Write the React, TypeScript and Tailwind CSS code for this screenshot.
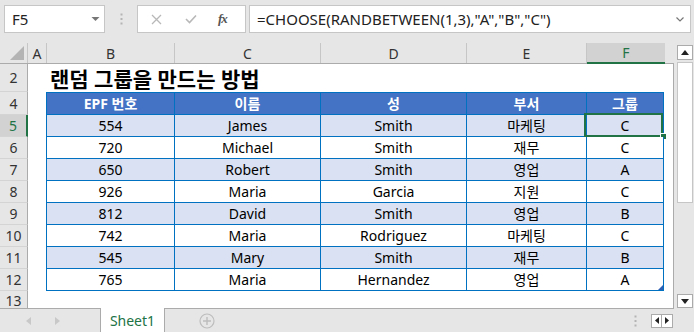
import React from "react";

const rows = [
  ["554", "James", "Smith", "마케팅", "C"],
  ["720", "Michael", "Smith", "재무", "C"],
  ["650", "Robert", "Smith", "영업", "A"],
  ["926", "Maria", "Garcia", "지원", "C"],
  ["812", "David", "Smith", "영업", "B"],
  ["742", "Maria", "Rodriguez", "마케팅", "C"],
  ["545", "Mary", "Smith", "재무", "B"],
  ["765", "Maria", "Hernandez", "영업", "A"],
];

const headers = ["EPF 번호", "이름", "성", "부서", "그룹"];

const cellW = [
  "w-[129px] border-l",
  "w-[146px]",
  "w-[146px]",
  "w-[120px]",
  "w-[77px]",
];

function RowHead({ n, selected, cls }: { n: string; selected?: boolean; cls: string }) {
  return (
    <div
      className={`${cls} w-[28px] shrink-0 flex items-center justify-center border-b border-b-[#d4d4d4] text-[14px] ${
        selected
          ? "bg-[#d2d2d2] text-[#217346] border-r-2 border-r-[#217346]"
          : "bg-[#e6e6e6] text-[#333] border-r border-r-[#ababab]"
      }`}
    >
      {n}
    </div>
  );
}

export default function App() {
  return (
    <div className="w-[694px] h-[332px] overflow-hidden bg-[#e6e6e6] flex flex-col font-['Noto_Sans','Noto_Sans_CJK_KR',sans-serif] text-[#222]">
      {/* formula bar */}
      <div className="h-[37px] shrink-0 flex items-start pt-[5px]">
        <div className="ml-[4px] w-[101px] h-[28px] bg-white border border-[#c6c6c6] flex items-center justify-between pl-[7px] pr-[4px]">
          <span className="text-[15px] text-[#222]">F5</span>
          <svg width="9" height="6" viewBox="0 0 9 6">
            <path d="M0.5 1 L8.5 1 L4.5 5 Z" fill="#777" />
          </svg>
        </div>
        <div className="w-[32px] h-[28px] flex items-center justify-center">
          <svg width="3" height="12" viewBox="0 0 3 12">
            <rect x="0.5" y="0.5" width="2" height="2" fill="#b4b4b4" />
            <rect x="0.5" y="5" width="2" height="2" fill="#b4b4b4" />
            <rect x="0.5" y="9.5" width="2" height="2" fill="#b4b4b4" />
          </svg>
        </div>
        <div className="w-[109px] h-[28px] bg-white border border-[#c6c6c6] flex items-center">
          <svg className="ml-[13px]" width="11" height="11" viewBox="0 0 11 11">
            <path d="M1 1 L10 10 M10 1 L1 10" stroke="#b8b8b8" strokeWidth="1.3" />
          </svg>
          <svg className="ml-[23px]" width="12" height="10" viewBox="0 0 12 10">
            <path d="M1 5 L4.5 8.5 L11 1.5" stroke="#b8b8b8" strokeWidth="1.6" fill="none" />
          </svg>
          <span className="ml-[21px] text-[13px] italic font-bold text-[#555] font-['Liberation_Serif',serif] tracking-[-1px]">
            fx
          </span>
        </div>
        <div className="ml-[3px] w-[442px] h-[28px] bg-white border border-[#c6c6c6] flex items-center justify-between pl-[7px] pr-[6px]">
          <span className="text-[15px] text-[#222] whitespace-nowrap">=CHOOSE(RANDBETWEEN(1,3),"A","B","C")</span>
          <svg width="8" height="5" viewBox="0 0 8 5">
            <path d="M0.5 0.5 L4 4 L7.5 0.5" stroke="#777" strokeWidth="1.2" fill="none" />
          </svg>
        </div>
      </div>

      {/* main area */}
      <div className="h-[272px] shrink-0 flex pt-[6px]">
        <div className="w-[674px] shrink-0 flex flex-col">
          {/* column headers */}
          <div className="h-[21px] shrink-0 flex text-[14px] text-[#333] border-b border-[#ababab]">
            <div className="w-[28px] shrink-0 border-r border-[#c6c6c6] relative">
              <svg className="absolute right-[3px] bottom-[3px]" width="14" height="14" viewBox="0 0 14 14">
                <path d="M14 0 L14 14 L0 14 Z" fill="#b4b4b4" />
              </svg>
            </div>
            <div className="w-[19px] shrink-0 border-r border-[#c6c6c6] flex items-center justify-center">A</div>
            <div className="w-[128px] shrink-0 border-r border-[#c6c6c6] flex items-center justify-center">B</div>
            <div className="w-[146px] shrink-0 border-r border-[#c6c6c6] flex items-center justify-center">C</div>
            <div className="w-[146px] shrink-0 border-r border-[#c6c6c6] flex items-center justify-center">D</div>
            <div className="w-[120px] shrink-0 border-r border-[#c6c6c6] flex items-center justify-center">E</div>
            <div className="w-[78px] shrink-0 bg-[#d2d2d2] border-b-2 border-[#217346] -mb-px flex items-center justify-center text-[#217346]">
              F
            </div>
            <div className="flex-1" />
          </div>

          {/* body */}
          <div className="flex-1 bg-white border-r border-b border-[#ababab] flex flex-col overflow-hidden">
            {/* row 2 title */}
            <div className="h-[28px] shrink-0 flex">
              <RowHead n="2" cls="h-[28px]" />
              <div className="w-[18px] shrink-0" />
              <div className="pl-[4px] flex items-end pb-[2px] text-[21px] font-bold text-black whitespace-nowrap leading-none">
                랜덤 그룹을 만드는 방법
              </div>
            </div>
            {/* row 4 table header */}
            <div className="h-[23px] shrink-0 flex">
              <RowHead n="4" cls="h-[23px]" />
              <div className="w-[18px] shrink-0" />
              {headers.map((h, i) => (
                <div
                  key={i}
                  className={`${cellW[i]} shrink-0 bg-[#4472c4] border-t border-r border-b border-[#0070c0] flex items-center justify-center text-white font-bold text-[14px]`}
                >
                  {h}
                </div>
              ))}
            </div>
            {rows.map((r, ri) => (
              <div key={ri} className="h-[22px] shrink-0 flex">
                <RowHead n={String(ri + 5)} selected={ri === 0} cls="h-[22px]" />
                <div className="w-[18px] shrink-0" />
                {r.map((c, ci) => (
                  <div
                    key={ci}
                    className={`${cellW[ci]} shrink-0 relative border-r border-b border-[#0070c0] flex items-center justify-center text-[14px] text-black ${
                      ri % 2 === 0 ? "bg-[#d9e1f2]" : "bg-white"
                    }`}
                  >
                    {c}
                    {ri === 0 && ci === 4 && (
                      <>
                        <div className="absolute left-[-3px] top-[-2px] w-[79px] h-[24px] border-2 border-[#217346]" />
                        <div className="absolute left-[73px] top-[18px] w-[7px] h-[7px] bg-[#217346] border border-white" />
                      </>
                    )}
                    {ri === 7 && ci === 4 && (
                      <svg className="absolute right-0 bottom-0" width="5" height="5" viewBox="0 0 5 5">
                        <path d="M5 0 L5 5 L0 5 Z" fill="#2f5fb3" />
                      </svg>
                    )}
                  </div>
                ))}
              </div>
            ))}
            {/* row 13 */}
            <div className="flex-1 flex">
              <div className="w-[28px] shrink-0 flex items-start justify-center pt-[2px] bg-[#e6e6e6] border-r border-[#ababab] text-[14px] leading-[16px] text-[#333]">
                13
              </div>
            </div>
          </div>
        </div>

        {/* vertical scrollbar */}
        <div className="flex-1 flex flex-col items-start pl-[3px]">
          <div className="mt-[2px] w-[16px] h-[15px] bg-white border border-[#ababab] flex items-center justify-center">
            <svg width="8" height="5" viewBox="0 0 8 5">
              <path d="M0 5 L8 5 L4 0 Z" fill="#222" />
            </svg>
          </div>
          <div className="mt-[2px] w-[16px] h-[141px] bg-white border border-[#c6c6c6]" />
          <div className="flex-1" />
          <div className="mb-[1px] w-[16px] h-[14px] bg-white border border-[#ababab] flex items-center justify-center">
            <svg width="8" height="5" viewBox="0 0 8 5">
              <path d="M0 0 L8 0 L4 5 Z" fill="#222" />
            </svg>
          </div>
        </div>
      </div>

      {/* sheet tab bar */}
      <div className="h-[23px] shrink-0 flex items-stretch">
        <div className="w-[100px] shrink-0 flex items-center">
          <svg className="ml-[26px]" width="5" height="8" viewBox="0 0 5 8">
            <path d="M5 0 L5 8 L0 4 Z" fill="#c8c8c8" />
          </svg>
          <svg className="ml-[24px]" width="5" height="8" viewBox="0 0 5 8">
            <path d="M0 0 L0 8 L5 4 Z" fill="#c8c8c8" />
          </svg>
        </div>
        <div className="w-[65px] shrink-0 bg-white border-l border-r border-[#ababab] flex items-center justify-center text-[14px] text-[#217346] -mt-px pt-px">
          Sheet1
        </div>
        <div className="w-[84px] shrink-0 flex items-center">
          <svg className="ml-[34px]" width="16" height="16" viewBox="0 0 16 16">
            <circle cx="8" cy="8" r="7" stroke="#bdbdbd" strokeWidth="1.2" fill="none" />
            <path d="M8 4 L8 12 M4 8 L12 8" stroke="#bdbdbd" strokeWidth="1.4" />
          </svg>
        </div>
        <div className="flex-1 flex items-center justify-end">
          <svg className="mr-[14px]" width="3" height="12" viewBox="0 0 3 12">
            <rect x="0.5" y="0.5" width="2" height="2" fill="#b4b4b4" />
            <rect x="0.5" y="5" width="2" height="2" fill="#b4b4b4" />
            <rect x="0.5" y="9.5" width="2" height="2" fill="#b4b4b4" />
          </svg>
          <div className="mr-[21px] flex h-[14px]">
            <div className="w-[11px] h-[14px] bg-white border border-[#ababab] flex items-center justify-center">
              <svg width="4" height="7" viewBox="0 0 4 7">
                <path d="M4 0 L4 7 L0 3.5 Z" fill="#222" />
              </svg>
            </div>
            <div className="w-[11px] h-[14px] bg-white border border-l-0 border-[#ababab] flex items-center justify-center">
              <svg width="4" height="7" viewBox="0 0 4 7">
                <path d="M0 0 L0 7 L4 3.5 Z" fill="#222" />
              </svg>
            </div>
          </div>
        </div>
      </div>
    </div>
  );
}
